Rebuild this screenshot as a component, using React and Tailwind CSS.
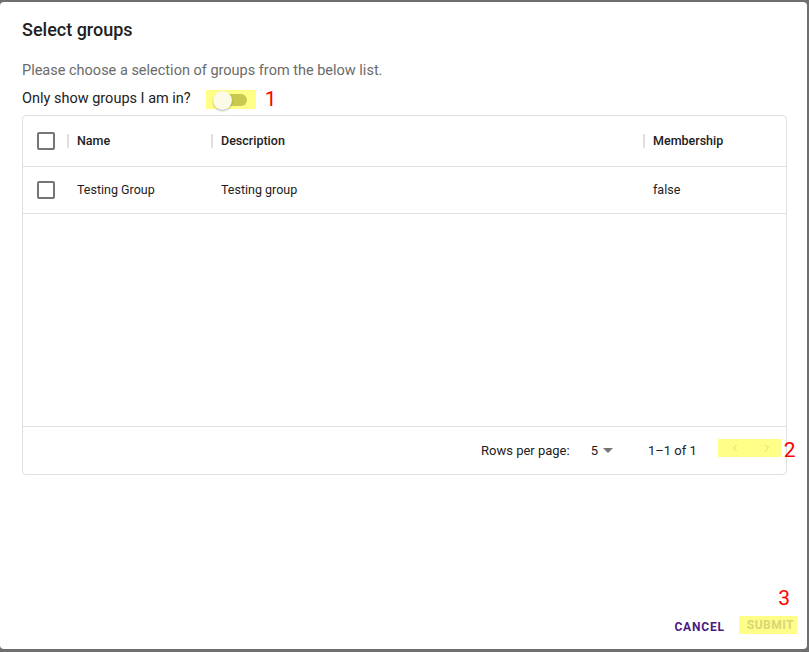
import { ChevronLeft, ChevronRight } from 'lucide-react';

function Box() {
  return <div className="w-[18px] h-[18px] rounded-[2px] border-2 border-[#757575]" />;
}

function Sep() {
  return <div className="w-[2px] h-[14px] bg-[#e0e0e0] mr-[8px]" />;
}

export default function App() {
  return (
    <div className="w-[809px] h-[652px] bg-[#6f6f6f] pt-[2px] pr-[2px] pb-[3px] font-['Roboto',sans-serif]">
      <div className="h-full bg-white rounded-[4px] flex flex-col text-[#212121]">
        <div className="px-[22px] pt-[18px]">
          <h2 className="text-[18px] font-medium leading-[20px] h-[20px]">Select groups</h2>
          <p className="mt-[22px] text-[14.5px] leading-[18px] text-[#6b6b6b]">
            Please choose a selection of groups from the below list.
          </p>
          <div className="mt-[9px] flex items-center h-[20px]">
            <span className="text-[14.5px]">Only show groups I am in?</span>
            <div className="ml-[15px] w-[50px] h-[19px] bg-[#ffff88] relative">
              <div className="absolute left-[14px] top-[4px] w-[27px] h-[12px] rounded-full bg-[#c9c950]" />
              <div className="absolute left-[7px] top-[1px] w-[19px] h-[19px] rounded-full bg-[#fbfbe8] shadow-[0_1px_2px_rgba(0,0,0,0.3)]" />
            </div>
            <span className="ml-[9px] text-[21px] text-[#ff0000] leading-none">1</span>
          </div>
        </div>

        <div className="ml-[22px] mr-[20px] mt-[6px] h-[360px] border border-[#e0e0e0] rounded-[4px] flex flex-col text-[12.5px]">
          <div className="h-[51px] flex items-center border-b border-[#e0e0e0] font-medium">
            <div className="w-[44px] pl-[14px]"><Box /></div>
            <div className="w-[144px] flex items-center"><Sep />Name</div>
            <div className="w-[432px] flex items-center"><Sep />Description</div>
            <div className="flex-1 flex items-center"><Sep />Membership</div>
          </div>
          <div className="h-[47px] flex items-center border-b border-[#e0e0e0]">
            <div className="w-[54px] pl-[14px]"><Box /></div>
            <div className="w-[144px]">Testing Group</div>
            <div className="w-[432px]">Testing group</div>
            <div className="flex-1">false</div>
          </div>
          <div className="flex-1" />
          <div className="h-[48px] border-t border-[#e0e0e0] flex items-center text-[13px] whitespace-nowrap">
            <span className="ml-[458px] shrink-0">Rows per page:</span>
            <span className="ml-[21px] shrink-0">5</span>
            <svg className="ml-[5px] shrink-0" width="10" height="5" viewBox="0 0 10 5"><path d="M0 0h10L5 5z" fill="#757575" /></svg>
            <span className="ml-[35px] shrink-0">1–1 of 1</span>
            <div className="ml-[21px] shrink-0 w-[63px] h-[18px] bg-[#ffff88] flex items-center justify-between pl-[11px] pr-[8px] mt-[-6px]">
              <ChevronLeft size={12} strokeWidth={1.5} color="#c8c870" />
              <ChevronRight size={12} strokeWidth={1.5} color="#c8c870" />
            </div>
            <span className="ml-[3px] shrink-0 text-[21px] text-[#ff0000] leading-none">2</span>
          </div>
        </div>

        <div className="flex-1" />
        <div className="flex justify-end items-end pr-[10px] pb-[13px]">
          <button className="text-[12px] font-bold tracking-[0.8px] text-[#4a1a7f] h-[18px] leading-[18px] mr-[14px]">CANCEL</button>
          <div className="relative">
            <span className="absolute right-[7px] top-[-24px] text-[21px] text-[#ff0000] leading-none">3</span>
            <button className="text-[12px] font-bold tracking-[0.5px] text-[#d6d67a] bg-[#ffff88] h-[18px] leading-[18px] pl-[8px] pr-[3px]">SUBMIT</button>
          </div>
        </div>
      </div>
    </div>
  );
}
